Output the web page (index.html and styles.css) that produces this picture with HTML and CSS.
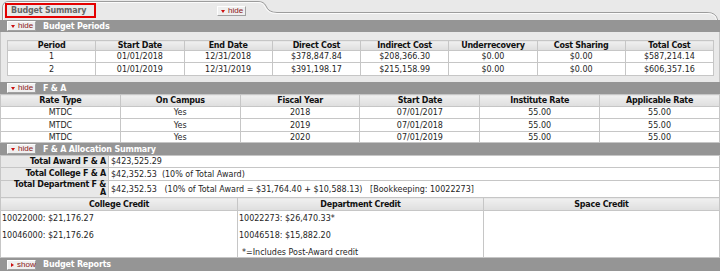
FILE: index.html
```html
<!DOCTYPE html>
<html>
<head>
<meta charset="utf-8">
<link rel="stylesheet" href="styles.css">
</head>
<body>
<div class="tabstrip">
  <svg class="tabshape" viewBox="0 0 720 20" width="720" height="20">
    <path d="M2.5 20 L2.5 8 Q2.5 1.5 9 1.5 L258 1.5 Q264 1.5 266 6 Q268.5 12.5 277 12.5 L707 12.5 Q716.5 12.5 717.5 20" fill="none" stroke="#9c9c9c" stroke-width="1"/>
    <path d="M3.5 20 L3.5 8 Q3.5 2.5 9 2.5 L258 2.5 Q263 2.5 265 7 Q267.5 13.5 277 13.5 L707 13.5 Q715.5 13.5 716.5 20" fill="none" stroke="#fbfbfb" stroke-width="1"/>
  </svg>
  <div class="tablabel">Budget Summary</div>
  <span class="btn tabbtn"><i class="tri-down"></i>hide</span>
</div>

<div class="bar"><span class="btn"><i class="tri-down"></i>hide</span>Budget Periods</div>
<div class="panel">
  <table class="grid periods">
    <tr class="h"><th>Period</th><th>Start Date</th><th>End Date</th><th>Direct Cost</th><th>Indirect Cost</th><th>Underrecovery</th><th>Cost Sharing</th><th>Total Cost</th></tr>
    <tr class="r12"><td>1</td><td>01/01/2018</td><td>12/31/2018</td><td>$378,847.84</td><td>$208,366.30</td><td>$0.00</td><td>$0.00</td><td>$587,214.14</td></tr>
    <tr class="r13"><td>2</td><td>01/01/2019</td><td>12/31/2019</td><td>$391,198.17</td><td>$215,158.99</td><td>$0.00</td><td>$0.00</td><td>$606,357.16</td></tr>
  </table>
</div>

<div class="bar"><span class="btn"><i class="tri-down"></i>hide</span>F &amp; A</div>
<table class="grid fa">
  <tr class="r12"><th>Rate Type</th><th>On Campus</th><th>Fiscal Year</th><th>Start Date</th><th>Institute Rate</th><th>Applicable Rate</th></tr>
  <tr class="r12"><td>MTDC</td><td>Yes</td><td>2018</td><td>07/01/2017</td><td>55.00</td><td>55.00</td></tr>
  <tr class="r13"><td>MTDC</td><td>Yes</td><td>2019</td><td>07/01/2018</td><td>55.00</td><td>55.00</td></tr>
  <tr class="r11"><td>MTDC</td><td>Yes</td><td>2020</td><td>07/01/2019</td><td>55.00</td><td>55.00</td></tr>
</table>

<div class="bar"><span class="btn"><i class="tri-down"></i>hide</span>F &amp; A Allocation Summary</div>
<table class="grid alloc">
  <tr class="r12"><th>Total Award F &amp; A</th><td>$423,525.29</td></tr>
  <tr class="r13"><th>Total College F &amp; A</th><td>$42,352.53&nbsp;&nbsp;(10% of Total Award)</td></tr>
  <tr class="r17"><th>Total Department F &amp; A</th><td>$42,352.53&nbsp;&nbsp;&nbsp;(10% of Total Award = $31,764.40 + $10,588.13)&nbsp;&nbsp;&nbsp;[Bookkeeping: 10022273]</td></tr>
</table>
<table class="grid credit">
  <tr class="r13"><th class="c1">College Credit</th><th class="c2">Department Credit</th><th>Space Credit</th></tr>
  <tr class="body">
    <td><div class="line">10022000: $21,176.27</div><div class="line">10046000: $21,176.26</div></td>
    <td><div class="line">10022273: $26,470.33*</div><div class="line">10046518: $15,882.20</div><div class="line note">*=Includes Post-Award credit</div></td>
    <td></td>
  </tr>
</table>

<div class="bar last"><span class="btn"><i class="tri-right"></i>show</span>Budget Reports</div>
</body>
</html>
```

FILE: styles.css
```css
body {
  margin: 0;
  width: 720px;
  height: 271px;
  overflow: hidden;
  font-family: "DejaVu Sans", Verdana, sans-serif;
  font-size: 8px;
  color: #1e1e1e;
  background: #e9e9e9;
}

.tabstrip {
  position: relative;
  height: 20px;
  display: flex;
  align-items: flex-start;
}

.tabshape {
  position: absolute;
  left: 0;
  top: 0;
}

.tablabel {
  position: relative;
  box-sizing: border-box;
  margin: 3px 0 0 5px;
  width: 91px;
  height: 15px;
  border: 2px solid #e40000;
  padding-left: 4px;
  line-height: 11px;
  color: #666;
  font-weight: bold;
  letter-spacing: -0.2px;
}

.btn {
  display: inline-flex;
  align-items: center;
  gap: 3px;
  box-sizing: border-box;
  width: 29px;
  height: 10px;
  padding-left: 3px;
  background: #efefef;
  border: 1px solid;
  border-color: #fdfdfd #a0a0a0 #a0a0a0 #fdfdfd;
  color: #8c1616;
  font-family: "Liberation Sans", Arial, sans-serif;
  font-weight: normal;
  font-size: 8px;
  line-height: 8px;
  letter-spacing: 0;
}

.tabbtn {
  position: relative;
  margin: 6px 0 0 121px;
}

.tri-down {
  display: block;
  width: 0;
  height: 0;
  border-left: 2.5px solid transparent;
  border-right: 2.5px solid transparent;
  border-top: 3px solid #cc1010;
}

.tri-right {
  display: block;
  width: 0;
  height: 0;
  border-top: 2.5px solid transparent;
  border-bottom: 2.5px solid transparent;
  border-left: 3px solid #cc1010;
}

.bar {
  display: flex;
  align-items: center;
  gap: 7px;
  height: 12px;
  padding-left: 7px;
  background: #959595;
  color: #fff;
  font-weight: bold;
  letter-spacing: -0.2px;
}

.bar.last {
  height: 13px;
}

.panel {
  padding: 8px 5px 6px 6px;
  border-left: 1px solid #c4c4c4;
  border-right: 1px solid #c4c4c4;
}

table.grid {
  border-collapse: collapse;
  table-layout: fixed;
  background: #fff;
}

.grid th,
.grid td {
  padding: 0;
  border: 1px solid #c6c6c6;
  text-align: center;
  line-height: 9px;
  white-space: nowrap;
}

.grid th {
  background: linear-gradient(#f0f0f0, #dedede);
  color: #111;
  font-weight: bold;
  letter-spacing: -0.25px;
}

.grid tr.h > * { height: 9px; }
.grid tr.r11 > * { height: 10px; }
.grid tr.r12 > * { height: 11px; }
.grid tr.r13 > * { height: 12px; }
.grid tr.r17 > * { height: 16px; }

.periods {
  width: 707px;
  border: 1px solid #b0b0b0;
}

.fa {
  width: 720px;
}

.alloc {
  width: 720px;
}

.alloc th {
  width: 98px;
  padding: 0 2px 0 7px;
  text-align: right;
  background: #e8e8e8;
  white-space: normal;
  line-height: 8px;
}

.alloc td {
  text-align: left;
  padding-left: 2px;
}

.credit {
  width: 720px;
  margin-top: -1px;
}

.credit .c1 { width: 236px; }
.credit .c2 { width: 245px; }

.credit tr.body td {
  height: 46px;
  vertical-align: top;
  text-align: left;
  padding-left: 1px;
}

.credit .line {
  height: 16px;
  line-height: 16px;
}

.credit .line + .line {
  margin-top: 1px;
}

.credit .note {
  height: 12px;
  padding-left: 3px;
}
```
